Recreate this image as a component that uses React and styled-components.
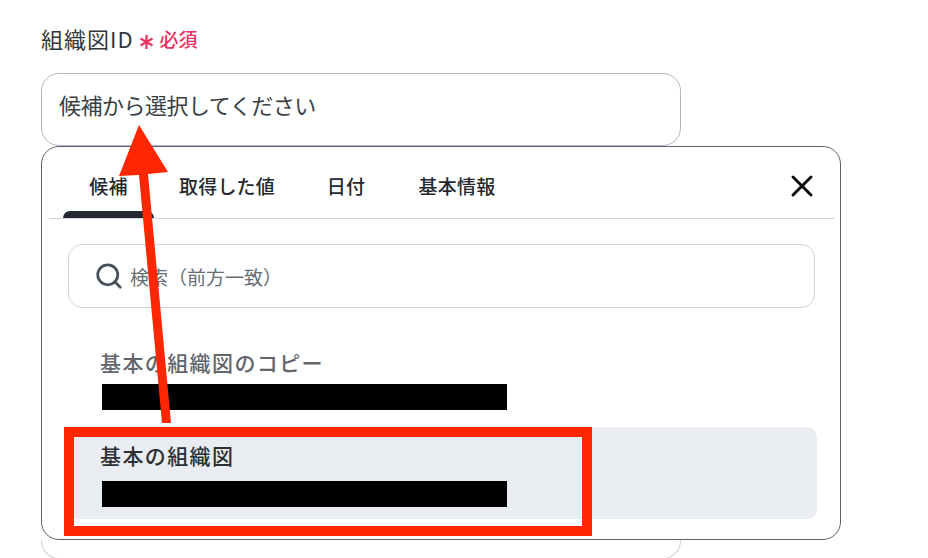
import React from "react";
import styled, { createGlobalStyle } from "styled-components";
import { X, Search } from "lucide-react";

const GlobalStyle = createGlobalStyle`
  html, body {
    margin: 0;
    background: #fff;
  }
  body {
    font-family: "Noto Sans CJK JP", "Noto Sans", sans-serif;
    color: #2f343a;
  }
`;

const Page = styled.div`
  position: relative;
  width: 928px;
  height: 558px;
  padding: 23px 0 0 41px;
  box-sizing: border-box;
  overflow: hidden;
`;

const LabelRow = styled.div`
  display: flex;
  align-items: center;
  height: 30px;
  margin-bottom: 20px;
`;

const Label = styled.span`
  font-size: 22px;
  line-height: 30px;
  letter-spacing: 1px;
  color: #33383e;
  margin-right: 5px;
`;

const Required = styled.span`
  display: flex;
  align-items: center;
  gap: 6px;
  font-size: 19px;
  font-weight: 500;
  color: #ec3263;

  svg {
    margin-top: 8px;
  }
`;

const Input = styled.div`
  display: flex;
  align-items: center;
  box-sizing: border-box;
  width: 640px;
  height: 73px;
  padding: 0 0 12px 17px;
  border: 1px solid #aeb7c2;
  border-radius: 18px;
  font-size: 22px;
  letter-spacing: -0.5px;
  color: #3a3f45;
`;

const Panel = styled.div`
  box-sizing: border-box;
  width: 800px;
  height: 394px;
  padding: 0 6px 0 7px;
  border: 1px solid #5c636d;
  border-radius: 18px;
  background: #fff;
`;

const TabBar = styled.div`
  display: flex;
  align-items: stretch;
  height: 71px;
  border-bottom: 1px solid #ced4dc;
`;

const Tab = styled.div`
  position: relative;
  display: flex;
  align-items: center;
  justify-content: center;
  box-sizing: border-box;
  width: ${(p) => p.$width}px;
  padding-top: 6px;
  font-size: 19px;
  font-weight: 500;
  letter-spacing: 0.2px;
  color: #24282e;

  ${(p) =>
    p.$active &&
    `
    &::after {
      content: "";
      position: absolute;
      left: 0;
      right: 0;
      bottom: 0;
      height: 7px;
      background: #252a31;
      border-radius: 7px 7px 0 0;
    }
  `}
`;

const TabList = styled.div`
  display: flex;
  flex: 1;
  padding-left: 14px;
`;

const CloseButton = styled.div`
  display: flex;
  align-items: center;
  margin-right: 14px;
  padding-top: 6px;
  color: #0c0d0e;
`;

const Body = styled.div`
  padding: 25px 19px 0 19px;
`;

const SearchBox = styled.div`
  display: flex;
  align-items: center;
  gap: 6px;
  box-sizing: border-box;
  height: 64px;
  padding-left: 25px;
  border: 1px solid #ced4dc;
  border-radius: 14px;
  font-size: 19px;
  color: #676d75;

  svg {
    color: #48505a;
  }
`;

const Options = styled.div`
  display: flex;
  flex-direction: column;
  margin: 27px -2px 0 0;
`;

const Option = styled.div`
  box-sizing: border-box;
  height: 92px;
  padding: ${(p) => (p.$selected ? "12px" : "11px")} 0 0 32px;
  border-radius: 10px;
  background: ${(p) => (p.$selected ? "#e9ecf1" : "transparent")};
`;

const OptionName = styled.div`
  height: 33px;
  margin-bottom: ${(p) => (p.$selected ? "9px" : "5px")};
  font-size: 21px;
  line-height: 33px;
  font-weight: 500;
  letter-spacing: 1.4px;
  color: ${(p) => (p.$selected ? "#2c3036" : "#62666c")};
`;

const Redaction = styled.div`
  width: 405px;
  height: 26px;
  margin-left: 2px;
  background: #000;
`;

const NextInput = styled.div`
  box-sizing: border-box;
  width: 640px;
  height: 19px;
  border: 1px solid #ced4dc;
  border-top: none;
  border-radius: 0 0 18px 18px;
`;

const Annotation = styled.svg`
  position: absolute;
  left: 0;
  top: 0;
  pointer-events: none;
`;

const Asterisk = () => (
  <svg width="15" height="14" viewBox="0 0 15 14" fill="none" stroke="#ec3263" strokeWidth="2.2">
    <path d="M7.5 0v14M1.5 3.5l12 7M13.5 3.5l-12 7" />
  </svg>
);

const tabs = [
  { label: "候補", width: 91, active: true },
  { label: "取得した値", width: 146 },
  { label: "日付", width: 92 },
  { label: "基本情報", width: 130 },
];

const options = [
  { name: "基本の組織図のコピー" },
  { name: "基本の組織図", selected: true },
];

const App = () => {
  return (
    <Page>
      <GlobalStyle />
      <LabelRow>
        <Label>組織図ID</Label>
        <Required>
          <Asterisk />
          必須
        </Required>
      </LabelRow>
      <Input>候補から選択してください</Input>
      <Panel>
        <TabBar>
          <TabList>
            {tabs.map((tab) => (
              <Tab key={tab.label} $width={tab.width} $active={tab.active}>
                {tab.label}
              </Tab>
            ))}
          </TabList>
          <CloseButton>
            <X size={36} strokeWidth={2} />
          </CloseButton>
        </TabBar>
        <Body>
          <SearchBox>
            <Search size={30} strokeWidth={2.2} />
            検索（前方一致）
          </SearchBox>
          <Options>
            {options.map((option) => (
              <Option key={option.name} $selected={option.selected}>
                <OptionName $selected={option.selected}>{option.name}</OptionName>
                <Redaction />
              </Option>
            ))}
          </Options>
        </Body>
      </Panel>
      <NextInput />
      <Annotation width="928" height="558" viewBox="0 0 928 558">
        <path d="M139 125 L168 172 L148 174 L171 423 L162 423 L139 175 L119 176 Z" fill="#ff2600" />
        <rect x="69" y="432" width="518" height="99" fill="none" stroke="#ff2600" strokeWidth="10" />
      </Annotation>
    </Page>
  );
};

export default App;
